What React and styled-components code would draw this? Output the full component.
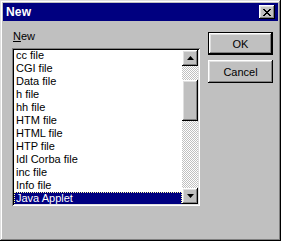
import React from 'react';
import styled, { createGlobalStyle } from 'styled-components';

const GlobalStyle = createGlobalStyle`
  html, body {
    margin: 0;
    padding: 0;
    background: #c0c0c0;
  }
  body {
    font-family: "Liberation Sans", Arial, sans-serif;
    font-size: 11px;
  }
`;

const raised = `
  box-shadow: inset -1px -1px #000, inset 1px 1px #fff,
    inset -2px -2px #808080, inset 2px 2px #dfdfdf;
`;

const Window = styled.div`
  box-sizing: border-box;
  width: 281px;
  height: 241px;
  padding: 3px;
  background: #c0c0c0;
  box-shadow: inset -1px -1px #000, inset 1px 1px #dfdfdf,
    inset -2px -2px #808080, inset 2px 2px #fff;
  display: flex;
  flex-direction: column;
`;

const TitleBar = styled.div`
  height: 18px;
  background: #000080;
  display: flex;
  align-items: center;
  justify-content: space-between;
  padding: 0 3px 0 3px;
`;

const Title = styled.span`
  color: #fff;
  font-weight: bold;
  font-size: 12px;
  letter-spacing: 0.2px;
`;

const CloseButton = styled.button`
  box-sizing: border-box;
  width: 16px;
  height: 14px;
  padding: 0;
  border: none;
  background: #c0c0c0;
  ${raised}
  display: flex;
  align-items: center;
  justify-content: center;
`;

const Body = styled.div`
  flex: 1;
  display: flex;
  align-items: flex-start;
  padding: 8px 0 0 9px;
  gap: 8px;
`;

const Column = styled.div`
  display: flex;
  flex-direction: column;
`;

const Label = styled.label`
  height: 19px;
  line-height: 14px;
  padding-left: 1px;
  color: #000;
  & u {
    text-decoration: underline;
  }
`;

const ListBox = styled.div`
  box-sizing: border-box;
  width: 188px;
  height: 158px;
  padding: 2px;
  display: flex;
  background: #fff;
  box-shadow: inset 1px 1px #808080, inset -1px -1px #fff,
    inset 2px 2px #000, inset -2px -2px #dfdfdf;
`;

const Items = styled.ul`
  flex: 1;
  margin: 0;
  padding: 0;
  list-style: none;
  overflow: hidden;
`;

const ItemsInner = styled.div`
  margin-top: -1px;
`;

const Item = styled.li`
  box-sizing: border-box;
  height: 13px;
  line-height: 13px;
  padding-left: 2px;
  white-space: nowrap;
  color: ${(p) => (p.$selected ? '#fff' : '#000')};
  background: ${(p) => (p.$selected ? '#000080' : 'transparent')};
  outline: ${(p) => (p.$selected ? '1px dotted #ffffa0' : 'none')};
  outline-offset: -1px;
`;

const ScrollBar = styled.div`
  width: 16px;
  display: flex;
  flex-direction: column;
`;

const ScrollButton = styled.div`
  box-sizing: border-box;
  width: 16px;
  height: 16px;
  background: #c0c0c0;
  ${raised}
  display: flex;
  align-items: center;
  justify-content: center;
`;

const Track = styled.div`
  flex: 1;
  padding-top: 14px;
  background: repeating-conic-gradient(#fff 0 25%, #c0c0c0 0 50%) 0 0 / 2px 2px;
`;

const Thumb = styled.div`
  box-sizing: border-box;
  width: 16px;
  height: 41px;
  background: #c0c0c0;
  ${raised}
`;

const Buttons = styled.div`
  display: flex;
  flex-direction: column;
  gap: 5px;
  padding-top: 3px;
`;

const Button = styled.button`
  box-sizing: border-box;
  width: 65px;
  height: 23px;
  padding: 0;
  border: none;
  font-family: "Liberation Sans", Arial, sans-serif;
  font-size: 11px;
  color: #000;
  background: #c0c0c0;
  box-shadow: ${(p) =>
    p.$default
      ? 'inset 0 0 0 1px #000, inset -2px -2px #000, inset 2px 2px #fff, inset -3px -3px #808080, inset 3px 3px #dfdfdf'
      : 'inset -1px -1px #000, inset 1px 1px #fff, inset -2px -2px #808080, inset 2px 2px #dfdfdf'};
`;

const Arrow = ({ up }) => (
  <svg width="7" height="4" viewBox="0 0 7 4">
    <path d={up ? 'M3.5 0 L7 4 L0 4 Z' : 'M0 0 L7 0 L3.5 4 Z'} fill="#000" />
  </svg>
);

const files = [
  'cc file',
  'CGI file',
  'Data file',
  'h file',
  'hh file',
  'HTM file',
  'HTML file',
  'HTP file',
  'Idl Corba file',
  'inc file',
  'Info file',
  'Java Applet',
];

const App = () => (
  <>
    <GlobalStyle />
    <Window>
      <TitleBar>
        <Title>New</Title>
        <CloseButton>
          <svg width="8" height="7" viewBox="0 0 8 7">
            <path d="M0 0h2v1h1v1h2V1h1V0h2v1H7v1H6v1H5v1h1v1h1v1h1v1H6V6H5V5H3v1H2v1H0V6h1V5h1V4h1V3H2V2H1V1H0z" fill="#000" />
          </svg>
        </CloseButton>
      </TitleBar>
      <Body>
        <Column>
          <Label>
            <u>N</u>ew
          </Label>
          <ListBox>
            <Items>
              <ItemsInner>
                {files.map((f, i) => (
                  <Item key={f} $selected={i === files.length - 1}>
                    {f}
                  </Item>
                ))}
              </ItemsInner>
            </Items>
            <ScrollBar>
              <ScrollButton>
                <Arrow up />
              </ScrollButton>
              <Track>
                <Thumb />
              </Track>
              <ScrollButton>
                <Arrow />
              </ScrollButton>
            </ScrollBar>
          </ListBox>
        </Column>
        <Buttons>
          <Button $default>OK</Button>
          <Button>Cancel</Button>
        </Buttons>
      </Body>
    </Window>
  </>
);

export default App;
